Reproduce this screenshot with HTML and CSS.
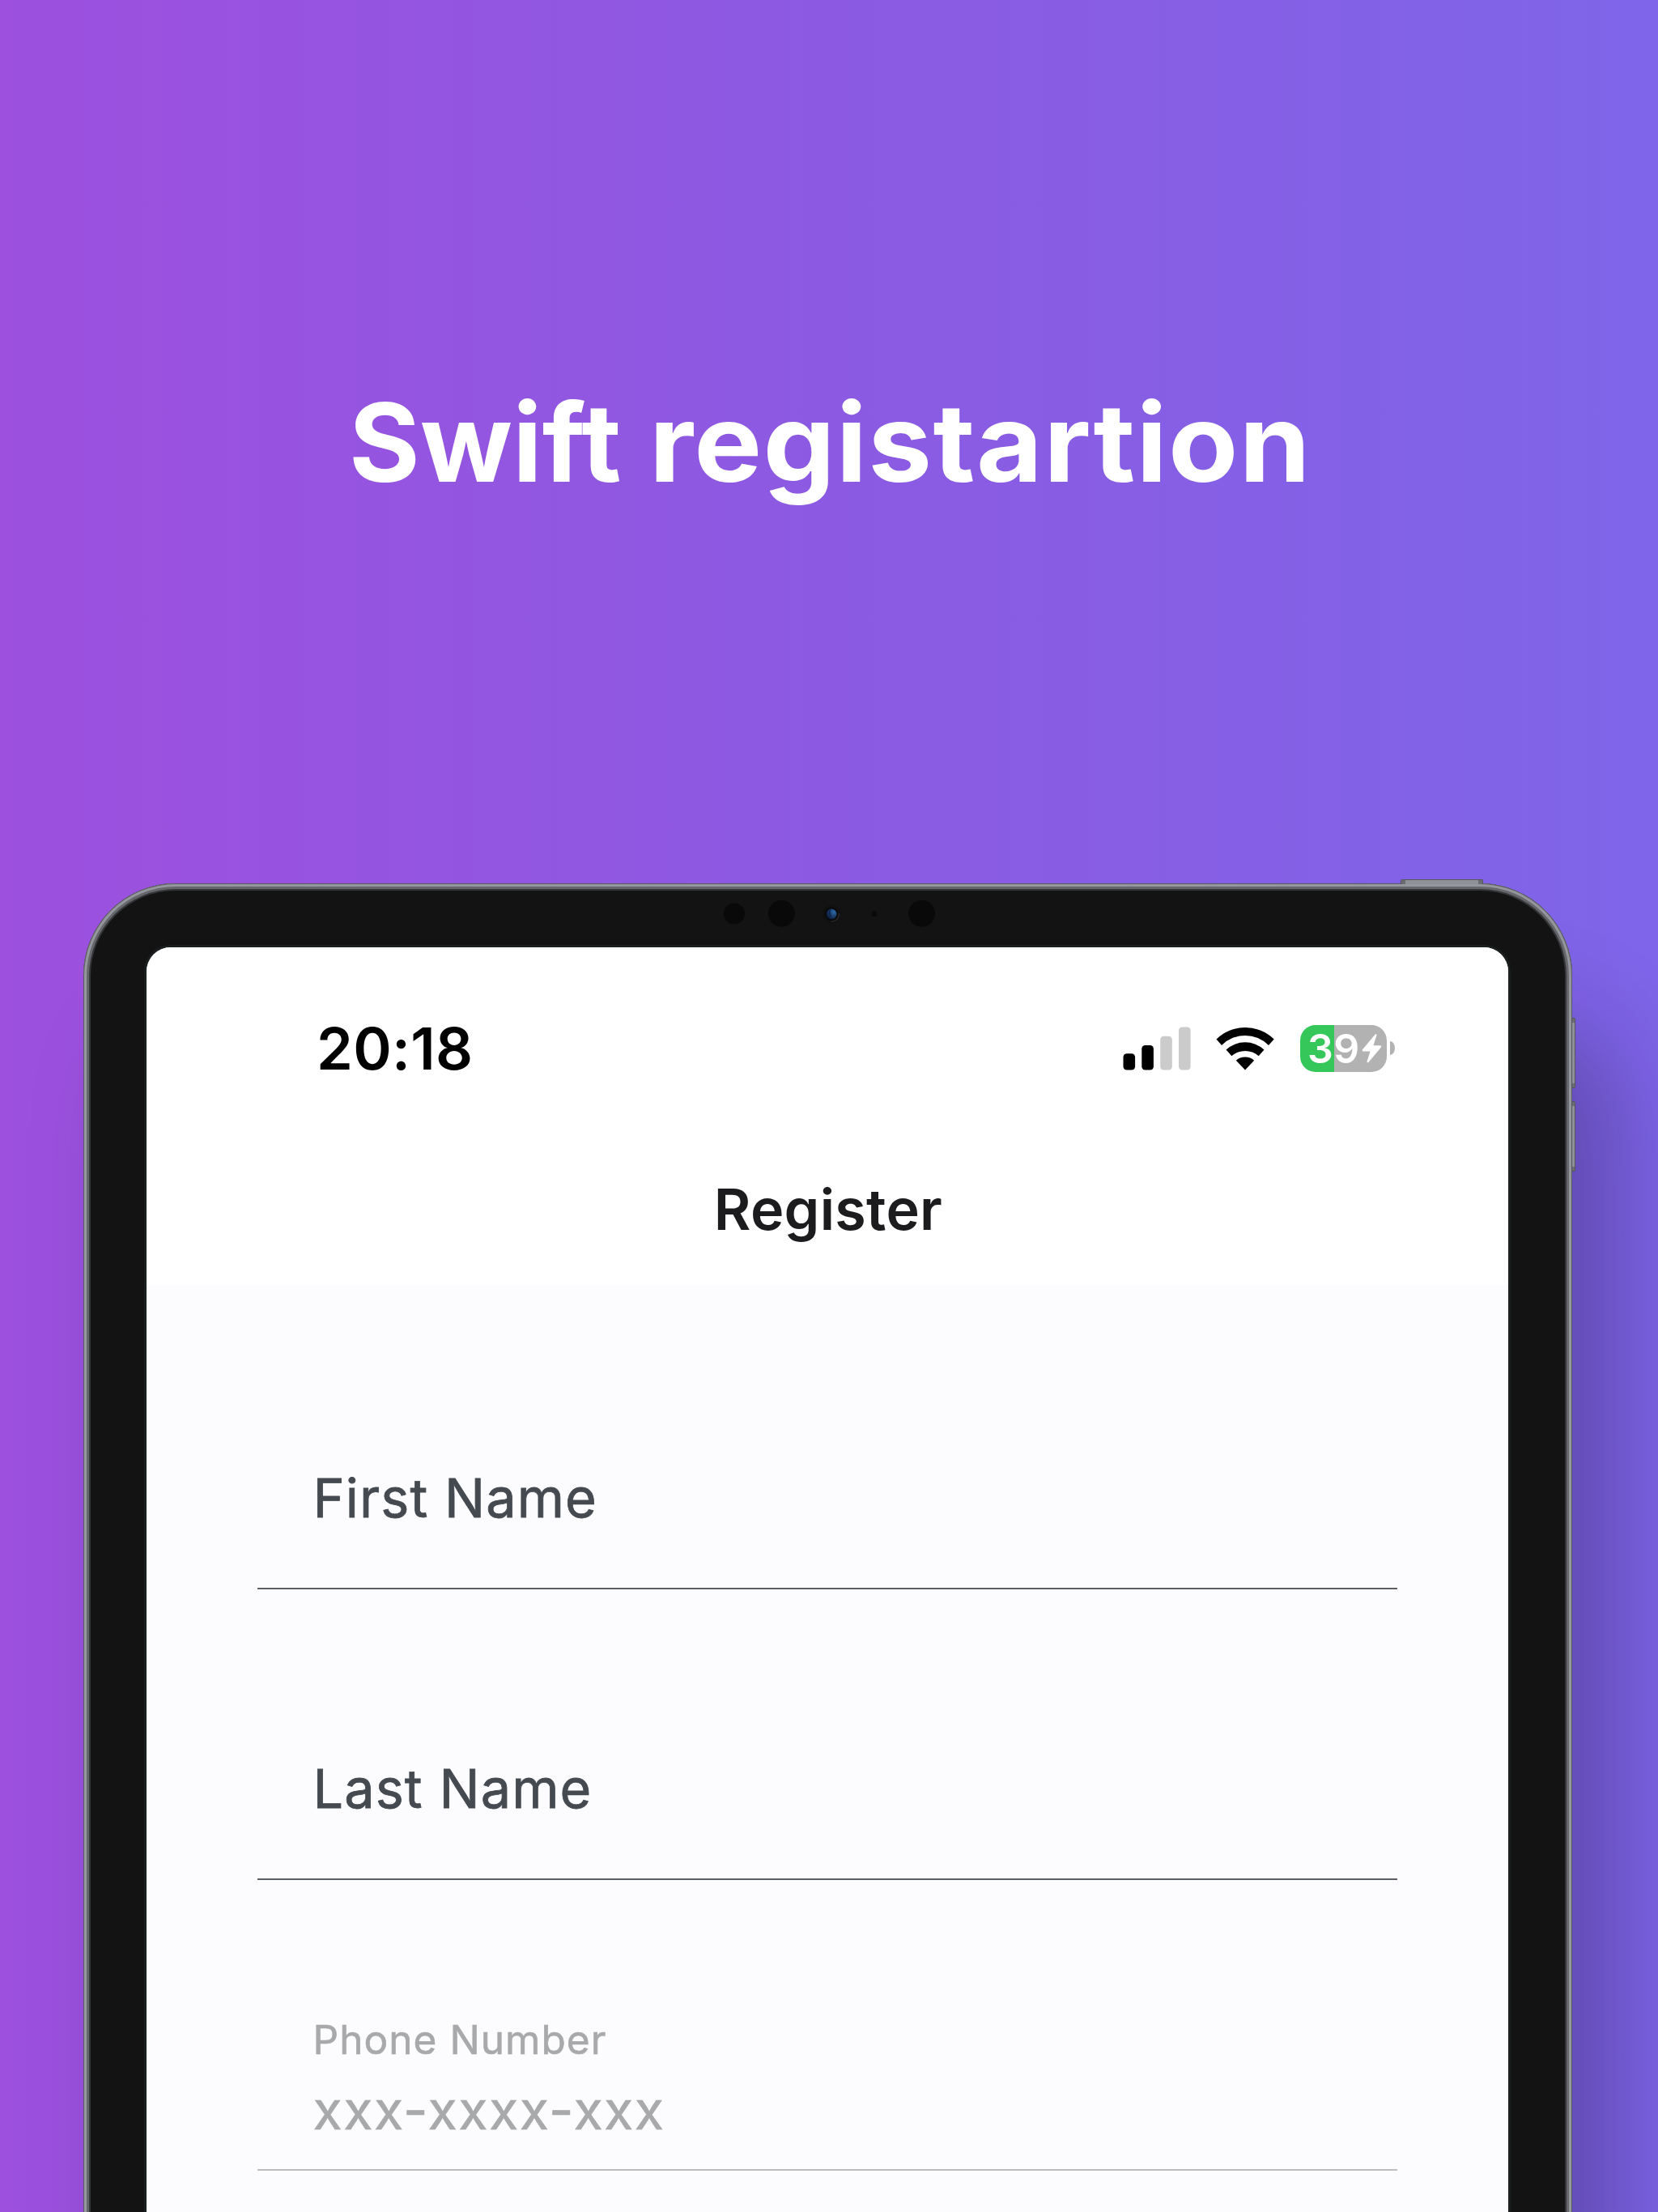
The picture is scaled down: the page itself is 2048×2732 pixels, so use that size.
FILE: index.html
```html
<!DOCTYPE html>
<html lang="en">
<head>
<meta charset="utf-8">
<title>Swift registartion</title>
<link rel="stylesheet" href="styles.css">
</head>
<body>
<main class="poster">
  <h1 class="headline"><span class="word-a">Swift</span><span class="word-b">registartion</span></h1>
  <section class="device">
    <i class="button button-power"></i>
    <i class="button button-up"></i>
    <i class="button button-down"></i>
    <svg class="sensors" width="270" height="40" viewBox="0 0 270 40" aria-hidden="true">
      <defs>
        <radialGradient id="lens" cx="0.75" cy="0.3" r="0.8">
          <stop offset="0" stop-color="#2c6aa8"/>
          <stop offset="0.45" stop-color="#1d4577"/>
          <stop offset="1" stop-color="#0b1633"/>
        </radialGradient>
      </defs>
      <g fill="#090909">
        <circle cx="15" cy="20.5" r="13"/>
        <circle cx="73.3" cy="20.3" r="16.5"/>
        <circle cx="188" cy="20.5" r="3.4"/>
        <circle cx="246.6" cy="20.3" r="16.5"/>
      </g>
      <circle cx="135" cy="21" r="11" fill="#101010"/>
      <path d="M144.500 20a9.500 9.500 0 0 1-10 10" fill="none" stroke="#242424" stroke-width="2"/>
      <circle cx="135" cy="21" r="8" fill="#080808"/>
      <circle cx="135" cy="21" r="6.500" fill="url(#lens)"/>
      <path d="M133.500 15.500q-2 4 1 8" fill="none" stroke="#0f2547" stroke-width="1.500"/>
    </svg>
    <div class="screen">
      <header class="top">
        <div class="status">
          <span class="time">20:18</span>
          <div class="icons">
            <svg width="84" height="54" viewBox="0 0 84 54" aria-hidden="true">
              <rect x="0.500" y="33.200" width="14.600" height="20.300" rx="4.300"/>
              <rect x="23.300" y="23" width="14.600" height="30.500" rx="4.300"/>
              <rect x="46.200" y="11.700" width="14.600" height="41.800" rx="4.300" fill="#cbcbcb"/>
              <rect x="69" y="0.500" width="14.600" height="53" rx="4.300" fill="#cbcbcb"/>
            </svg>
            <svg class="wifi" width="72" height="54" viewBox="0 0 72 54" aria-hidden="true">
              <path d="M0.500 15.500A51 51 0 0 1 71.700 15.500L65 23A41 41 0 0 0 7 23Z"/>
              <path d="M12.500 28.500A34.500 34.500 0 0 1 59.500 28.500L52.700 36.300A25 25 0 0 0 19.400 36.300Z"/>
              <path d="M24.800 41.800A17 17 0 0 1 47.200 41.800L36 53.500Z"/>
            </svg>
            <div class="battery">
              <span class="level">39</span>
              <svg class="bolt" width="25" height="36" viewBox="0 0 25 36" aria-hidden="true">
                <path d="M16.500 0.800C17.300-.2 18.900.5 18.400 2L14.400 14.200H22.600C24.200 14.200 24.600 15.600 23.700 16.700L8.500 35C7.600 36 6.100 35.200 6.600 33.800L10.600 21.600H2.200C.6 21.600.3 20.200 1.200 19.100Z"/>
              </svg>
            </div>
            <i class="nub"></i>
          </div>
        </div>
        <h2 class="screen-title">Register</h2>
      </header>
      <form class="form">
        <div class="field"><label class="label">First Name</label></div>
        <div class="field"><label class="label">Last Name</label></div>
        <div class="field field-phone">
          <label class="small-label">Phone Number</label>
          <span class="placeholder">xxx-xxxx-xxx</span>
        </div>
      </form>
    </div>
  </section>
</main>
</body>
</html>
```

FILE: styles.css
```css
* { box-sizing: border-box; }

body {
  margin: 0;
  font-family: Inter, "Liberation Sans", sans-serif;
}

.poster {
  width: 2048px;
  height: 2732px;
  overflow: hidden;
  padding-top: 466px;
  background: linear-gradient(90deg, #9d50de 0%, #8c5ae2 50%, #7e65e9 100%);
}

.headline {
  display: flex;
  margin: 0 0 465px 431px;
  color: #fff;
  font-size: 134px;
  font-weight: 700;
  line-height: 160px;
  white-space: nowrap;
}

.word-a {
  width: 371px;
  letter-spacing: 0.300px;
}

.word-b {
  letter-spacing: 1.200px;
  transform: scaleX(1.052);
  transform-origin: left;
}

.device {
  position: relative;
  width: 1839px;
  height: 1800px;
  margin-left: 102.500px;
  padding: 79px 78.500px;
  border-radius: 114px;
  background: #131313;
  box-shadow:
    inset 0 0 0 1px #5a5b60,
    inset 0 0 0 4px #95979e,
    inset 0 0 0 7px #66676c,
    inset 0 0 0 9px #343536,
    60px 170px 125px rgba(20, 14, 40, 0.29);
}

.button {
  position: absolute;
  background: #8f9197;
  border: 1px solid #56575c;
}

.button-power {
  left: 1627px;
  top: -5px;
  width: 102px;
  height: 6px;
  border-bottom: 0;
  border-radius: 2px 2px 0 0;
  box-shadow: inset 5px 0 #6b6c71, inset -5px 0 #6b6c71;
}

.button-up,
.button-down {
  left: 1838px;
  width: 5px;
  height: 87px;
  border-radius: 0 2px 2px 0;
  box-shadow: inset 0 5px #6b6c71, inset 0 -5px #6b6c71;
}

.button-up { top: 166px; }
.button-down { top: 269px; }

.sensors {
  position: absolute;
  left: 789.500px;
  top: 17px;
}

.screen {
  width: 1682px;
  height: 1700px;
  overflow: hidden;
  border-radius: 30px;
  background: #fcfcff;
  box-shadow: 0 0 0 3px #1b1f20;
}

.top {
  height: 417px;
  padding-top: 84px;
  background: #fff;
}

.status {
  display: flex;
  align-items: center;
  justify-content: space-between;
  height: 81px;
  padding: 0 140px 0 210px;
}

.time {
  color: #000;
  font-size: 72px;
  font-weight: 600;
  letter-spacing: 0.300px;
  line-height: 80px;
}

.icons {
  display: flex;
  align-items: center;
}

.wifi { margin: 0 32px 0 31px; }

.battery {
  display: flex;
  align-items: center;
  gap: 4px;
  width: 107px;
  height: 58px;
  padding-left: 9px;
  border-radius: 19px;
  background: linear-gradient(90deg, #36c75b 0 41.500px, #b2b2b2 41.500px);
  color: #fff;
}

.level {
  width: 63px;
  font-size: 50px;
  font-weight: 600;
  letter-spacing: 0.500px;
  line-height: 58px;
}

.bolt { fill: #fff; }

.nub {
  width: 6px;
  height: 17px;
  margin-left: 4px;
  border-radius: 0 6px 6px 0 / 0 8.500px 8.500px 0;
  background: #b2b2b2;
}

.screen-title {
  margin: 117px 0 0;
  padding-left: 2px;
  color: #1c1c1e;
  font-size: 70px;
  font-weight: 600;
  letter-spacing: 0.300px;
  line-height: 84px;
  text-align: center;
}

.form {
  padding: 17px 137px 0;
}

.field {
  display: flex;
  flex-direction: column;
  justify-content: flex-end;
  height: 359px;
  padding: 0 0 71px 68.500px;
  border-bottom: 2px solid #5b5e62;
}

.label {
  color: #444a50;
  font-size: 66.500px;
  letter-spacing: 1.100px;
  line-height: 80px;
  -webkit-text-stroke: 0.800px currentColor;
}

.field-phone {
  padding-bottom: 33px;
  border-color: #bbbcbe;
  color: #a8a9ab;
  -webkit-text-stroke: 0.600px currentColor;
}

.small-label {
  font-size: 49.500px;
  letter-spacing: 1.050px;
  line-height: 60px;
}

.placeholder {
  margin-top: 17px;
  font-size: 66.500px;
  letter-spacing: 1.400px;
  line-height: 80px;
}
```
